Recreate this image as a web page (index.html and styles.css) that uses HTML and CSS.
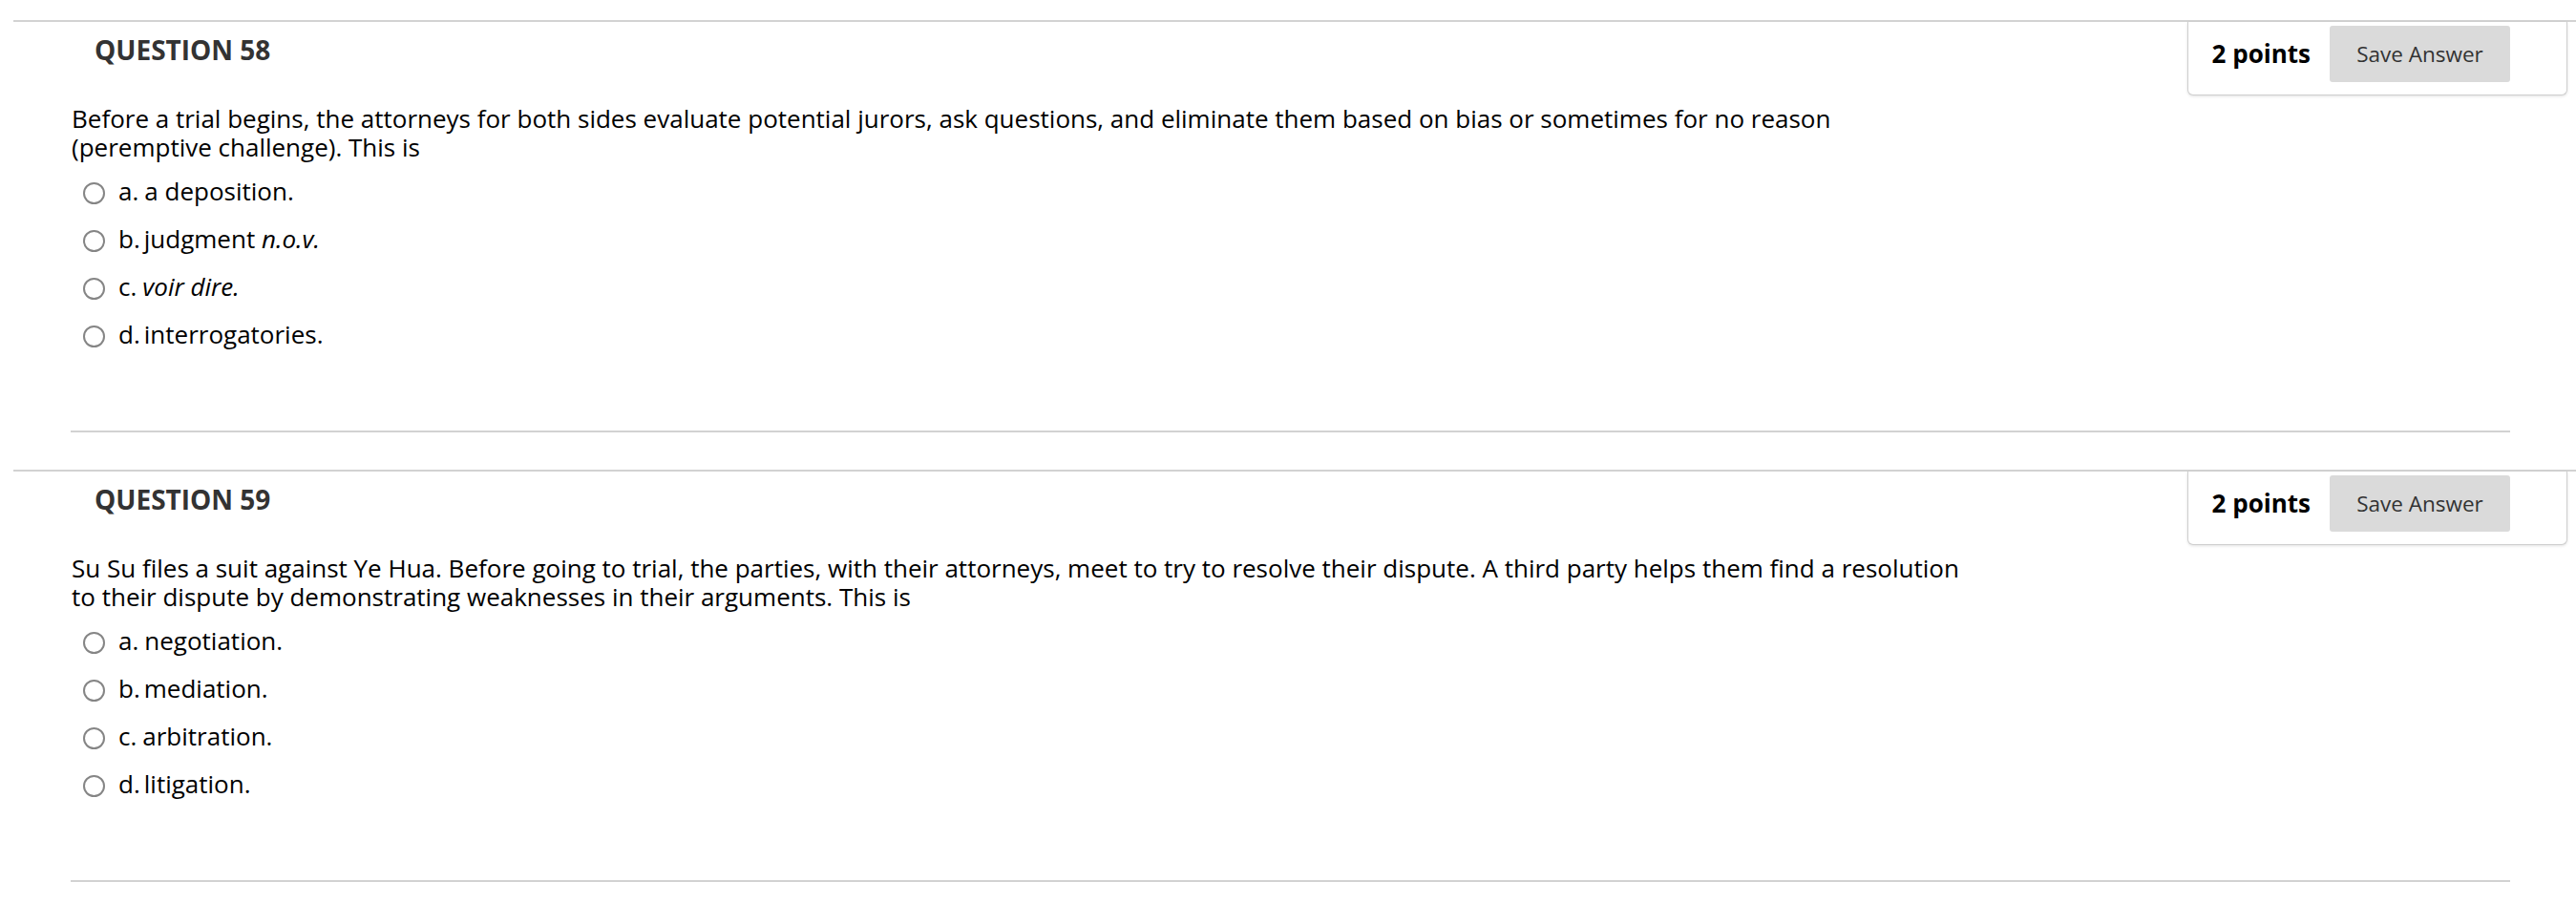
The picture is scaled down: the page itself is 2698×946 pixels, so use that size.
FILE: index.html
```html
<!DOCTYPE html>
<html lang="en">
<head>
<meta charset="utf-8">
<title>Questions</title>
<link rel="stylesheet" href="styles.css">
</head>
<body>
<div class="question">
  <div class="q-head">
    <h3 class="q-title">QUESTION 58</h3>
    <div class="points-box">
      <span class="points">2 points</span>
      <button class="save-btn" type="button">Save Answer</button>
    </div>
  </div>
  <div class="q-body">
    <p class="q-text">Before a trial begins, the attorneys for both sides evaluate potential jurors, ask questions, and eliminate them based on bias or sometimes for no reason<br>(peremptive challenge). This is</p>
    <ul class="options">
      <li class="option"><input class="radio" type="radio" name="q58"><span class="opt-label">a.</span><span class="opt-text wide">a deposition.</span></li>
      <li class="option"><input class="radio" type="radio" name="q58"><span class="opt-label">b.</span><span class="opt-text">judgment <em>n.o.v.</em></span></li>
      <li class="option"><input class="radio" type="radio" name="q58"><span class="opt-label">c.</span><span class="opt-text wide"><em>voir dire.</em></span></li>
      <li class="option"><input class="radio" type="radio" name="q58"><span class="opt-label">d.</span><span class="opt-text">interrogatories.</span></li>
    </ul>
  </div>
  <div class="q-sep"></div>
</div>
<div class="question">
  <div class="q-head">
    <h3 class="q-title">QUESTION 59</h3>
    <div class="points-box">
      <span class="points">2 points</span>
      <button class="save-btn" type="button">Save Answer</button>
    </div>
  </div>
  <div class="q-body">
    <p class="q-text">Su Su files a suit against Ye Hua. Before going to trial, the parties, with their attorneys, meet to try to resolve their dispute. A third party helps them find a resolution<br>to their dispute by demonstrating weaknesses in their arguments. This is</p>
    <ul class="options">
      <li class="option"><input class="radio" type="radio" name="q59"><span class="opt-label">a.</span><span class="opt-text wide">negotiation.</span></li>
      <li class="option"><input class="radio" type="radio" name="q59"><span class="opt-label">b.</span><span class="opt-text">mediation.</span></li>
      <li class="option"><input class="radio" type="radio" name="q59"><span class="opt-label">c.</span><span class="opt-text wide">arbitration.</span></li>
      <li class="option"><input class="radio" type="radio" name="q59"><span class="opt-label">d.</span><span class="opt-text">litigation.</span></li>
    </ul>
  </div>
  <div class="q-sep"></div>
</div>
</body>
</html>
```
FILE: styles.css
```css
html, body {
  margin: 0;
  padding: 0;
  background: #ffffff;
}

body {
  font-family: "Open Sans", "Liberation Sans", sans-serif;
  color: #111111;
  padding-top: 21px;
}

.question {
  margin-left: 14px;
  border-top: 2px solid #d2d2d2;
  margin-bottom: 39px;
}

.q-head {
  display: flex;
  justify-content: space-between;
  align-items: flex-start;
  height: 77px;
}

.q-title {
  margin: 0;
  padding: 10px 0 0 85px;
  font-size: 28px;
  line-height: 38px;
  font-weight: 700;
  color: #333333;
}

.points-box {
  display: flex;
  align-items: center;
  gap: 20px;
  box-sizing: border-box;
  height: 77px;
  margin-right: 9px;
  padding: 4px 59px 11px 25px;
  border: 1px solid #cfcfcf;
  border-top: none;
  border-radius: 0 0 6px 6px;
  box-shadow: 0 1px 3px rgba(0, 0, 0, 0.12);
  background: #ffffff;
}

.points {
  font-size: 26px;
  font-weight: 700;
  color: #000000;
  line-height: 30px;
  position: relative;
  top: -2px;
}

.save-btn {
  width: 189px;
  height: 59px;
  border: none;
  border-radius: 3px;
  background: #dadada;
  color: #333333;
  font-family: "Open Sans", "Liberation Sans", sans-serif;
  font-size: 22.5px;
  padding: 0;
  position: relative;
  top: -1px;
}

.q-body {
  padding: 0 69px 0 61px;
  margin-top: 9px;
}

.q-text {
  margin: 0;
  font-size: 26px;
  line-height: 30px;
  color: #000000;
}

.options {
  list-style: none;
  margin: 8px 0 0 12px;
  padding: 0;
}

.option {
  display: flex;
  align-items: center;
  height: 50px;
  font-size: 26px;
  line-height: 30px;
  color: #000000;
}

.radio {
  appearance: none;
  -webkit-appearance: none;
  margin: 0 14px 0 0;
  width: 23px;
  height: 23px;
  box-sizing: border-box;
  border: 2px solid #858585;
  border-radius: 50%;
  background: #ffffff;
  flex: none;
}

.opt-label,
.opt-text {
  position: relative;
  top: -2px;
}

.opt-text {
  margin-left: 4px;
}

.opt-text.wide {
  margin-left: 6px;
}

.opt-text em {
  font-style: italic;
}

.q-sep {
  margin: 74px 69px 0 60px;
  border-top: 2px solid #d2d2d2;
}
```
